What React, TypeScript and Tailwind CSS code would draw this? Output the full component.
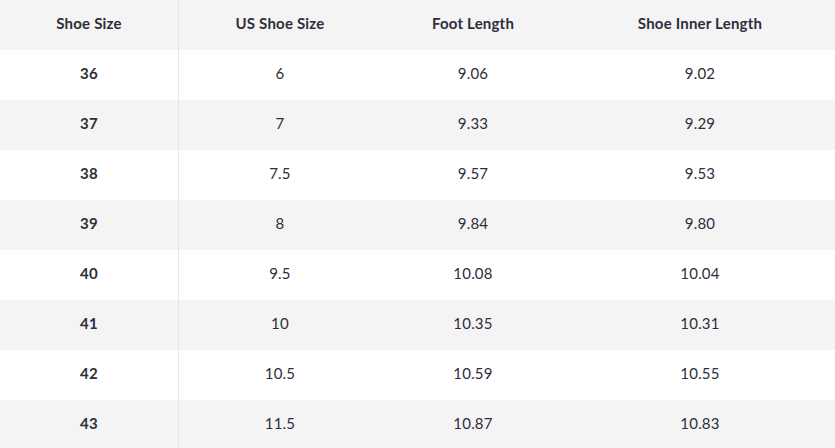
const rows = [
  ["36", "6", "9.06", "9.02"],
  ["37", "7", "9.33", "9.29"],
  ["38", "7.5", "9.57", "9.53"],
  ["39", "8", "9.84", "9.80"],
  ["40", "9.5", "10.08", "10.04"],
  ["41", "10", "10.35", "10.31"],
  ["42", "10.5", "10.59", "10.55"],
  ["43", "11.5", "10.87", "10.83"],
];

const headers = ["Shoe Size", "US Shoe Size", "Foot Length", "Shoe Inner Length"];

const cols = "grid grid-cols-[179px_202px_184px_1fr] h-[50px] items-center text-center";

export default function App() {
  return (
    <div className="w-[835px] h-[448px] overflow-hidden bg-white text-[15px] tracking-[0.2px] text-[#2e2e3a] font-['Lato','Liberation_Sans',sans-serif]">
      <div className={`${cols} bg-[#f4f4f4] font-bold`}>
        {headers.map((h, i) => (
          <div key={h} className={`h-full flex items-center justify-center pb-[3px] ${i === 0 ? "border-r border-[#e6e6e6]" : ""}`}>
            {h}
          </div>
        ))}
      </div>
      {rows.map((r, ri) => (
        <div key={r[0]} className={`${cols} ${ri % 2 === 1 ? "bg-[#f4f4f4]" : "bg-white"}`}>
          {r.map((c, i) => (
            <div
              key={i}
              className={`h-full flex items-center justify-center pb-[3px] ${i === 0 ? "font-bold border-r border-[#e6e6e6]" : ""}`}
            >
              {c}
            </div>
          ))}
        </div>
      ))}
    </div>
  );
}
